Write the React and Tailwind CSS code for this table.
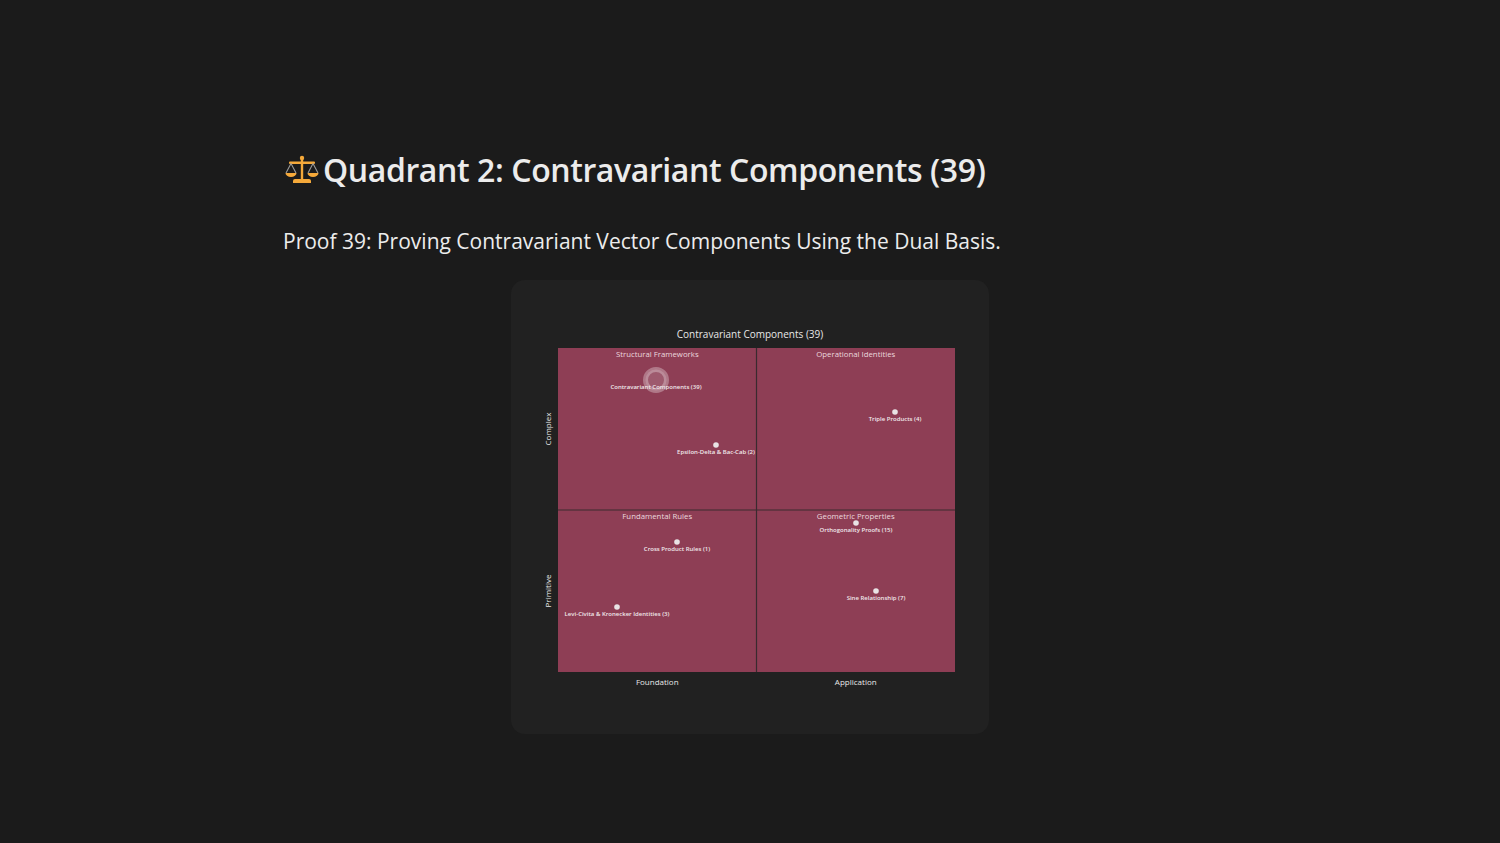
const points = [
  { name: "Contravariant Components (39)", x: 145, y: 100, big: true },
  { name: "Epsilon-Delta & Bac-Cab (2)", x: 205, y: 165 },
  { name: "Triple Products (4)", x: 384, y: 132 },
  { name: "Cross Product Rules (1)", x: 166, y: 262 },
  { name: "Levi-Civita & Kronecker Identities (3)", x: 106, y: 327 },
  { name: "Orthogonality Proofs (15)", x: 345, y: 243 },
  { name: "Sine Relationship (7)", x: 365, y: 311 },
];

function ScaleIcon() {
  return (
    <svg width="34" height="30" viewBox="0 0 34 30" className="shrink-0">
      <g fill="#f5a93a">
        <circle cx="17" cy="3" r="2.2" />
        <rect x="15.8" y="3" width="2.4" height="21" />
        <rect x="4" y="6.5" width="26" height="2.4" rx="1" />
        <path d="M10 24 h14 a2 2 0 0 1 2 2 v2 h-18 v-2 a2 2 0 0 1 2 -2z" />
        <path d="M0.5 18 h11 a5.5 4 0 0 1 -11 0z" />
        <path d="M22.5 18 h11 a5.5 4 0 0 1 -11 0z" />
      </g>
      <g stroke="#9a9a9a" strokeWidth="1.1" fill="none">
        <path d="M6 8.5 L1 18 M6 8.5 L11 18" />
        <path d="M28 8.5 L23 18 M28 8.5 L33 18" />
      </g>
    </svg>
  );
}

function QuadrantChart() {
  const L = 47, T = 68, W = 397, H = 324;
  const mx = L + W / 2, my = T + H / 2;
  const font = "'Open Sans', 'Liberation Sans', sans-serif";
  return (
    <svg width="478" height="454" viewBox="0 0 478 454" style={{ fontFamily: font }}>
      <text x="239" y="58" textAnchor="middle" fontSize="10" fill="#e8e8e8">
        Contravariant Components (39)
      </text>
      <rect x={L} y={T} width={W} height={H} fill="#8e3e55" />
      <line x1={mx} y1={T} x2={mx} y2={T + H} stroke="#3a2a2f" strokeWidth="1.2" />
      <line x1={L} y1={my} x2={L + W} y2={my} stroke="#3a2a2f" strokeWidth="1.2" />
      <g fontSize="7.8" fill="#ecd8de" textAnchor="middle">
        <text x={L + W / 4} y={T + 9}>Structural Frameworks</text>
        <text x={L + (3 * W) / 4} y={T + 9}>Operational Identities</text>
        <text x={L + W / 4} y={my + 9}>Fundamental Rules</text>
        <text x={L + (3 * W) / 4} y={my + 9}>Geometric Properties</text>
      </g>
      <g fontSize="8" fill="#e8e8e8" textAnchor="middle">
        <text x={L + W / 4} y="405">Foundation</text>
        <text x={L + (3 * W) / 4} y="405">Application</text>
        <text transform={`translate(40 ${T + H / 4}) rotate(-90)`}>Complex</text>
        <text transform={`translate(40 ${T + (3 * H) / 4}) rotate(-90)`}>Primitive</text>
      </g>
      {points.map((p) => (
        <g key={p.name}>
          {p.big ? (
            <circle cx={p.x} cy={p.y} r="10.5" fill="#ffffff" fillOpacity="0.15" stroke="#ffffff" strokeOpacity="0.3" strokeWidth="5" />
          ) : (
            <circle cx={p.x} cy={p.y} r="2.8" fill="#e9e3e5" />
          )}
          <text x={p.x} y={p.y + 8.5} textAnchor="middle" fontSize="6" fontWeight="600" fill="#f1e9ec">
            {p.name}
          </text>
        </g>
      ))}
    </svg>
  );
}

export default function App() {
  return (
    <div className="min-h-screen bg-[#1b1b1b] text-[#ececec]" style={{ fontFamily: "'Open Sans', 'Noto Sans', sans-serif" }}>
      <div className="w-[934px] mx-auto pt-[150px]">
        <h1 className="flex items-center gap-[4px] text-[32px] font-semibold leading-[40px] ml-[2px] tracking-[-0.4px]">
          <ScaleIcon />
          <span>Quadrant 2: Contravariant Components (39)</span>
        </h1>
        <p className="mt-[35px] text-[21px] leading-[32px]">
          Proof 39: Proving Contravariant Vector Components Using the Dual Basis.
        </p>
        <div className="mt-[23px] flex justify-center">
          <div className="w-[478px] h-[454px] rounded-[14px] bg-[#212121] flex">
            <QuadrantChart />
          </div>
        </div>
      </div>
    </div>
  );
}
